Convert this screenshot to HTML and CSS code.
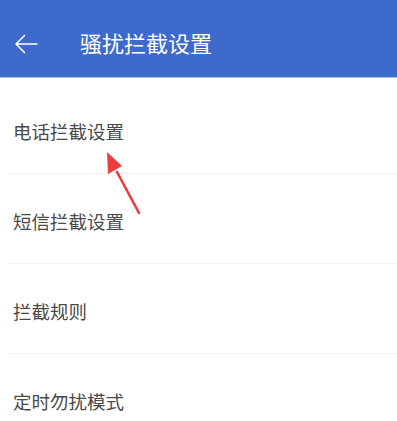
FILE: index.html
```html
<!DOCTYPE html>
<html lang="zh-CN">
<head>
    <meta charset="UTF-8">
    <meta name="viewport" content="width=device-width, initial-scale=1.0">
    <title>骚扰拦截设置</title>
    <link rel="stylesheet" href="styles.css">
</head>
<body>
    <header class="topbar">
        <svg class="back" width="24" height="20" viewBox="0 0 24 20">
            <path d="M23 10H2M10.5 1.5L2 10l8.5 8.5" fill="none" stroke="#fff" stroke-width="1.5" stroke-linecap="round" stroke-linejoin="round"/>
        </svg>
        <h1>骚扰拦截设置</h1>
    </header>

    <ul class="menu">
        <li>电话拦截设置</li>
        <li>短信拦截设置</li>
        <li>拦截规则</li>
        <li>定时勿扰模式</li>
    </ul>

    <!-- 红色箭头标注 -->
    <svg class="pointer" width="50" height="70" viewBox="0 0 50 70">
        <path d="M39 63L17 22" stroke="#ee3b3b" stroke-width="2.6" stroke-linecap="round"/>
        <path d="M7 2L8 24L22 16Z" fill="#ee3b3b"/>
    </svg>
</body>
</html>
```

FILE: styles.css
```css
body {
    margin: 0;
    background: #fff;
    font-family: "Noto Sans CJK SC", "Noto Sans", sans-serif;
    position: relative;
    height: 421px;
    overflow: hidden;
}

.topbar {
    height: 78px;
    background-color: #3e6bcb;
    display: flex;
    align-items: center;
    padding: 10px 0 0 14px;
    border-bottom: 1px solid #a9c0f0;
    box-sizing: border-box;
}

.topbar h1 {
    margin: -4px 0 0 42px;
    font-size: 22px;
    font-weight: normal;
    color: #fff;
}

.menu {
    list-style: none;
    margin: 0;
    padding: 6px 0 0;
}

.menu li {
    height: 90px;
    box-sizing: border-box;
    padding: 32px 0 0 5px;
    margin-left: 8px;
    font-size: 18.5px;
    color: #4a4a4a;
    border-bottom: 1px solid #f2f2f2;
    line-height: 30px;
}

.menu li:last-child {
    border-bottom: none;
}

.pointer {
    position: absolute;
    left: 100px;
    top: 150px;
}
```
